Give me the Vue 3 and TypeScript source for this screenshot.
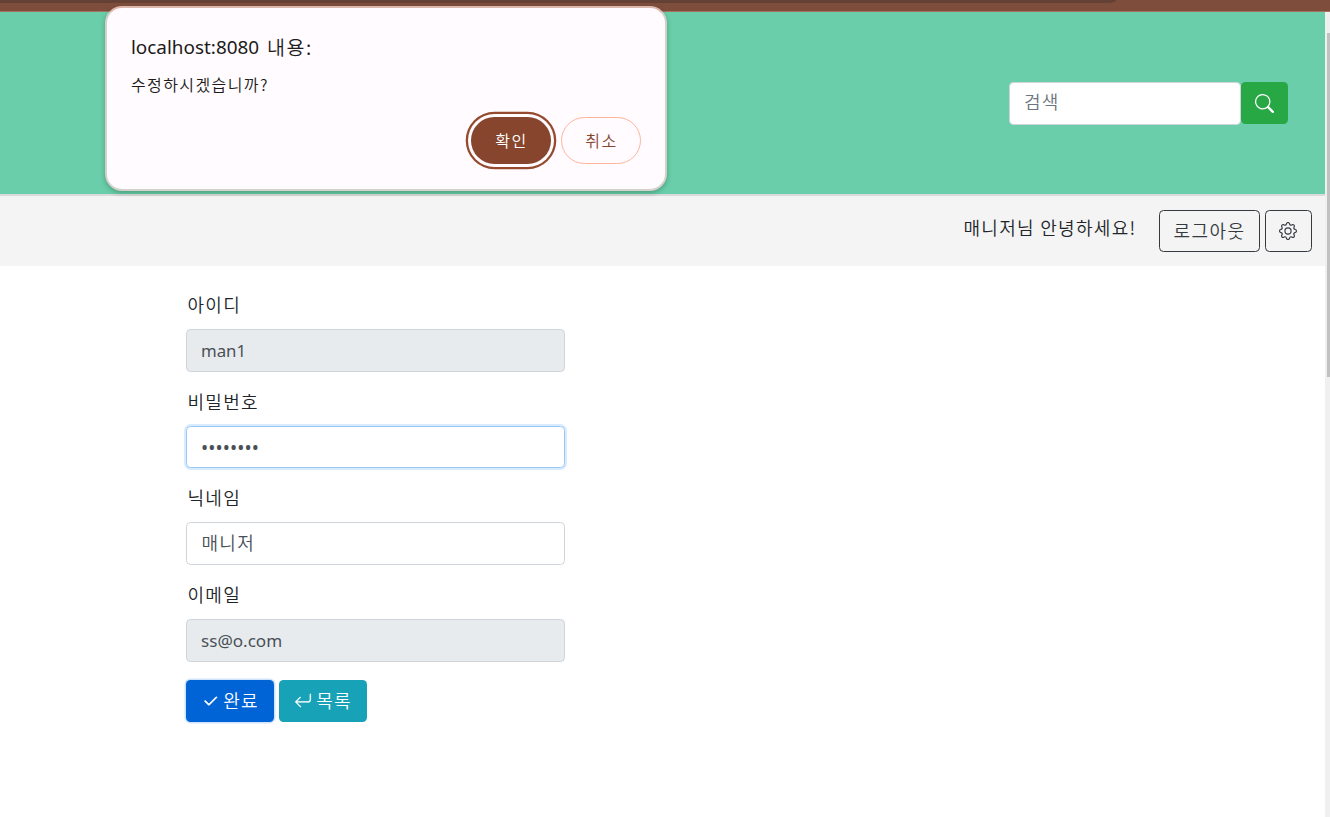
<script setup lang="ts">
import { ref } from 'vue'

interface Field {
  id: string
  label: string
  value: string
  type: string
  readonly: boolean
  focused: boolean
}

const keyword = ref('')
const fields = ref<Field[]>([
  { id: 'userId', label: '아이디', value: 'man1', type: 'text', readonly: true, focused: false },
  { id: 'password', label: '비밀번호', value: '••••••••', type: 'text', readonly: false, focused: true },
  { id: 'nickname', label: '닉네임', value: '매니저', type: 'text', readonly: false, focused: false },
  { id: 'email', label: '이메일', value: 'ss@o.com', type: 'text', readonly: true, focused: false },
])
</script>

<template>
  <div class="window">
    <div class="chrome"><div class="tabline"></div></div>
    <div class="view">
      <div class="page">
        <header class="header">
          <form class="search" @submit.prevent>
            <input v-model="keyword" class="control search-input ko" placeholder="검색" />
            <button class="btn btn-green" aria-label="search">
              <svg class="icon search-icon" viewBox="0 0 16 16"><path d="M11.742 10.344a6.5 6.5 0 1 0-1.397 1.398h-.001c.03.04.062.078.098.115l3.85 3.85a1 1 0 0 0 1.415-1.414l-3.85-3.85a1.007 1.007 0 0 0-.115-.1zM12 6.5a5.5 5.5 0 1 1-11 0 5.5 5.5 0 0 1 11 0z" /></svg>
            </button>
          </form>
        </header>
        <nav class="nav">
          <span class="greeting ko">매니저님 안녕하세요!</span>
          <button class="btn btn-outline logout ko">로그아웃</button>
          <button class="btn btn-outline settings" aria-label="settings">
            <svg class="icon" viewBox="0 0 16 16"><path d="M8 4.754a3.246 3.246 0 1 0 0 6.492 3.246 3.246 0 0 0 0-6.492zM5.754 8a2.246 2.246 0 1 1 4.492 0 2.246 2.246 0 0 1-4.492 0z" /><path d="M9.796 1.343c-.527-1.79-3.065-1.79-3.592 0l-.094.319a.873.873 0 0 1-1.255.52l-.292-.16c-1.64-.892-3.433.902-2.54 2.541l.159.292a.873.873 0 0 1-.52 1.255l-.319.094c-1.79.527-1.79 3.065 0 3.592l.319.094a.873.873 0 0 1 .52 1.255l-.16.292c-.892 1.64.901 3.434 2.541 2.54l.292-.159a.873.873 0 0 1 1.255.52l.094.319c.527 1.79 3.065 1.79 3.592 0l.094-.319a.873.873 0 0 1 1.255-.52l.292.16c1.64.893 3.434-.902 2.54-2.541l-.159-.292a.873.873 0 0 1 .52-1.255l.319-.094c1.79-.527 1.79-3.065 0-3.592l-.319-.094a.873.873 0 0 1-.52-1.255l.16-.292c.893-1.64-.902-3.433-2.541-2.54l-.292.159a.873.873 0 0 1-1.255-.52l-.094-.319zm-2.633.283c.246-.835 1.428-.835 1.674 0l.094.319a1.873 1.873 0 0 0 2.693 1.115l.291-.16c.764-.415 1.6.42 1.184 1.185l-.159.292a1.873 1.873 0 0 0 1.116 2.692l.318.094c.835.246.835 1.428 0 1.674l-.319.094a1.873 1.873 0 0 0-1.115 2.693l.16.291c.415.764-.42 1.6-1.185 1.184l-.291-.159a1.873 1.873 0 0 0-2.693 1.116l-.094.318c-.246.835-1.428.835-1.674 0l-.094-.319a1.873 1.873 0 0 0-2.692-1.115l-.292.16c-.764.415-1.6-.42-1.184-1.185l.159-.291A1.873 1.873 0 0 0 1.945 8.93l-.319-.094c-.835-.246-.835-1.428 0-1.674l.319-.094A1.873 1.873 0 0 0 3.06 4.377l-.16-.292c-.415-.764.42-1.6 1.185-1.184l.292.159a1.873 1.873 0 0 0 2.692-1.115l.094-.319z" /></svg>
          </button>
        </nav>
        <form class="form" @submit.prevent>
          <div v-for="f in fields" :key="f.id" class="group">
            <label class="label ko" :for="f.id">{{ f.label }}</label>
            <input
              :id="f.id"
              v-model="f.value"
              class="control"
              :class="[f.id, { focused: f.focused, ko: f.id === 'nickname' }]"
              :type="f.type"
              :readonly="f.readonly"
            />
          </div>
          <div class="actions">
            <button class="btn btn-primary ko">
              <svg class="icon" viewBox="0 0 16 16"><path d="M13.854 3.646a.5.5 0 0 1 0 .708l-7 7a.5.5 0 0 1-.708 0l-3.5-3.5a.5.5 0 1 1 .708-.708L6.5 10.293l6.646-6.647a.5.5 0 0 1 .708 0z" stroke="currentColor" stroke-width=".8" transform="translate(0.9 1) scale(.94)" /></svg>
              <span>완료</span>
            </button>
            <button class="btn btn-info ko">
              <svg class="icon" viewBox="0 0 16 16"><path fill-rule="evenodd" d="M14.5 1.5a.5.5 0 0 1 .5.5v4.8a2.5 2.5 0 0 1-2.5 2.5H2.707l3.347 3.346a.5.5 0 0 1-.708.708l-4.2-4.2a.5.5 0 0 1 0-.708l4-4a.5.5 0 1 1 .708.708L2.707 8.3H12.5A1.5 1.5 0 0 0 14 6.8V2a.5.5 0 0 1 .5-.5z" stroke="currentColor" stroke-width=".2" /></svg>
              <span>목록</span>
            </button>
          </div>
        </form>
      </div>
      <div class="scrollbar"><div class="thumb"></div></div>
    </div>
    <div class="dialog" role="dialog">
      <div class="dialog-title"><span class="host">localhost:8080</span><span class="ko">내용:</span></div>
      <div class="dialog-text ko">수정하시겠습니까?</div>
      <div class="dialog-actions">
        <button class="pill pill-ok ko">확인</button>
        <button class="pill pill-cancel ko">취소</button>
      </div>
    </div>
  </div>
</template>

<style>
body { margin: 0; overflow: hidden; }
</style>

<style scoped>
* { box-sizing: border-box; }
.window {
  position: relative;
  width: 1330px;
  height: 817px;
  overflow: hidden;
  display: flex;
  flex-direction: column;
  background: #fff;
  color: #212529;
  font: 400 18px/27px "Noto Sans", "Noto Sans CJK KR", sans-serif;
}
button, input { font: inherit; margin: 0; outline: none; }
.ko { font-family: "Noto Sans CJK KR DemiLight", "Noto Sans CJK KR", sans-serif; font-weight: 350; letter-spacing: 1.3px; }
.chrome { height: 12px; flex: none; background: #7f4d3c; border-bottom: 1px solid #a2735f; }
.tabline { width: 1116px; height: 3px; background: #634135; border-bottom-right-radius: 8px 3px; }
.view { flex: 1; display: flex; }
.page { flex: 1; }
.header { height: 184px; background: #6aceaa; border-bottom: 2px solid #dadada; padding: 70px 37px 0 0; display: flex; justify-content: flex-end; }
.search { display: flex; align-items: flex-start; }
.control {
  display: block;
  width: 100%;
  height: 43px;
  padding: 6px 14px 8px;
  border: 1px solid #ced4da;
  border-radius: 4.5px;
  background: #fff;
  color: #495057;
}
.control:read-only { background: #e8ebee; }
.control.search-input { width: 232px; padding: 4px 14px 10px; }
.search-input::placeholder { color: #6c757d; opacity: 1; }
.btn {
  height: 42px;
  padding: 0 12px;
  display: flex;
  align-items: center;
  justify-content: center;
  border: 1px solid transparent;
  border-radius: 4.5px;
  color: #fff;
}
.icon { width: 18px; height: 18px; fill: currentColor; flex: none; }
.search-icon { width: 19px; height: 19px; }
.btn-green { width: 47px; background: #28a745; }
.nav { height: 70px; background: #f4f4f4; display: flex; align-items: flex-start; justify-content: flex-end; padding: 14px 13px 0 0; }
.greeting { margin: 4px 22.5px 0 0; }
.btn-outline { background: transparent; border-color: #343a40; color: #343a40; }
.logout.btn { width: 101px; margin-right: 5px; padding: 0 0 2px; letter-spacing: 1.4px; font-weight: 300; }
.settings.btn { width: 47px; padding: 0 14px 0 12px; }
.form { width: 379px; margin: 25px 0 0 186px; }
.group { height: 96.6px; }
.label { display: block; height: 38px; line-height: 27px; padding-left: 1.5px; }
.userId, .email { font-size: 17.1px; }
.userId.control { padding-top: 7px; padding-bottom: 7px; font-size: 16.8px; }
.email.control { padding-top: 7px; padding-bottom: 6px; }
.password { font-size: 19px; }
.password.control { height: 42px; padding-top: 8px; padding-bottom: 5px; letter-spacing: .1px; }
.nickname.control { padding: 5px 14px 9px 14.5px; }
.focused { border-color: #9dc7f3; box-shadow: 0 0 0 2px #d9ebff; }
.actions { display: flex; gap: 5px; padding-top: 3px; }
.actions .btn { width: 88px; padding: 0; gap: 4px; }
.actions span { padding-bottom: 2px; }
.btn-primary { background: #0064d6; box-shadow: 0 0 0 1.5px #cfe3fb; }
.btn-info { background: #17a2b8; }
.scrollbar { width: 5px; background: #f0f0f0; padding: 21px 0 0 2px; }
.thumb { height: 344px; background: #c1c1c1; }
.dialog {
  position: absolute;
  left: 105px;
  top: 6px;
  width: 562px;
  height: 185px;
  border: 2px solid #d3d1c9;
  border-top-color: #dcb8ad;
  border-radius: 17px;
  background: #fffbff;
  color: #201a18;
  padding: 25px 24px 0;
  box-shadow: 0 2px 5px rgba(0, 50, 30, .3);
}
.dialog-title { display: flex; gap: 8px; height: 28px; line-height: 29px; font-size: 18.9px; }
.dialog-title .ko { letter-spacing: 1.5px; font-size: 19.5px; line-height: 27px; font-weight: 300; }
.dialog-text { margin-top: 11px; height: 24px; line-height: 24px; font-size: 16px; letter-spacing: 1.4px; }
.dialog-actions { display: flex; justify-content: flex-end; gap: 10px; margin-top: 21px; }
.pill { width: 80px; height: 47px; border-radius: 24px; font-size: 16px; padding: 0 0 0 1px; letter-spacing: 1.5px; }
.pill-ok { border: 0; background: #86452c; color: #fff; box-shadow: 0 0 0 3px #fffbff, 0 0 0 5.3px #95492d; }
.pill-cancel { background: transparent; border: 1.5px solid #ffb59c; color: #86452c; }
</style>
